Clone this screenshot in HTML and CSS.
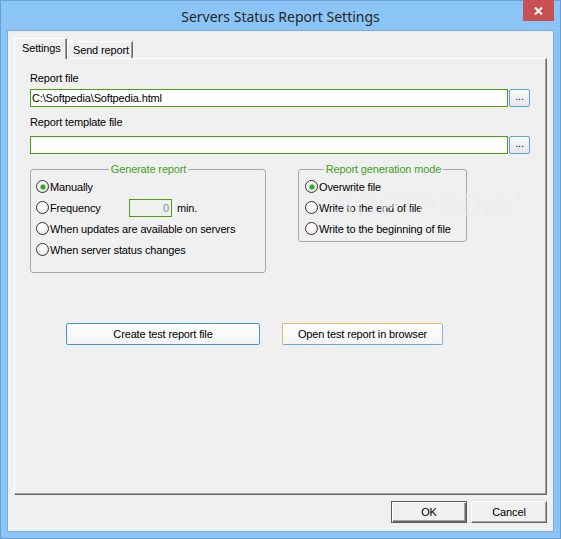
FILE: index.html
```html
<!DOCTYPE html>
<html>
<head>
<meta charset="utf-8">
<link rel="stylesheet" href="styles.css">
</head>
<body>
<div class="window">
  <div class="titlebar">
    <span class="title">Servers Status Report Settings</span>
    <div class="close">
      <svg width="9" height="8" viewBox="0 0 9 8"><path d="M1 0.5 L8 7.5 M8 0.5 L1 7.5" stroke="#fff" stroke-width="2" fill="none"/></svg>
    </div>
  </div>
  <div class="client">
    <div class="tabs">
      <div class="tab active">Settings</div>
      <div class="tab inactive">Send report</div>
    </div>
    <div class="panel">
      <div class="label">Report file</div>
      <div class="filerow first">
        <div class="textbox">C:\Softpedia\Softpedia.html</div>
        <div class="browse">...</div>
      </div>
      <div class="label second">Report template file</div>
      <div class="filerow second">
        <div class="textbox"></div>
        <div class="browse">...</div>
      </div>
      <div class="groups">
        <fieldset class="group g1">
          <legend>Generate report</legend>
          <div class="opt"><span class="radio on"></span>Manually</div>
          <div class="opt"><span class="radio"></span><span class="freq">Frequency</span><span class="num">0</span><span class="min">min.</span></div>
          <div class="opt"><span class="radio"></span>When updates are available on servers</div>
          <div class="opt"><span class="radio"></span>When server status changes</div>
        </fieldset>
        <fieldset class="group g2">
          <legend>Report generation mode</legend>
          <div class="opt"><span class="radio on"></span>Overwrite file</div>
          <div class="opt"><span class="radio"></span>Write to the end of file</div>
          <div class="opt"><span class="radio"></span>Write to the beginning of file</div>
        </fieldset>
      </div>
      <div class="actions">
        <div class="btn create">Create test report file</div>
        <div class="btn open">Open test report in browser</div>
      </div>
      <div class="watermark">SOFTPEDIA<span class="reg">®</span></div>
    </div>
    <div class="footer">
      <div class="dlg ok">OK</div>
      <div class="dlg cancel">Cancel</div>
    </div>
  </div>
</div>
</body>
</html>
```
FILE: styles.css
```css
* { box-sizing: border-box; }
body {
  margin: 0;
  width: 561px;
  height: 539px;
  overflow: hidden;
  font-family: "Liberation Sans", Arial, sans-serif;
  font-size: 11px;
  letter-spacing: -0.15px;
  color: #000;
}
.window {
  width: 561px;
  height: 539px;
  background: #8bc4f7;
  border: 1px solid #6b9fd2;
  display: flex;
  flex-direction: column;
}
.titlebar {
  height: 29px;
  position: relative;
  display: flex;
  align-items: center;
  justify-content: center;
  flex: none;
}
.title {
  font-family: "Noto Sans", sans-serif;
  font-size: 14px;
  letter-spacing: 0;
  color: #262626;
  margin-top: 1px;
}
.close {
  position: absolute;
  top: -1px;
  right: 6px;
  width: 31px;
  height: 21px;
  background: #c75050;
  display: flex;
  align-items: center;
  justify-content: center;
}
.close svg { display: block; }
.client {
  flex: 1;
  margin: 0 6px 6px 6px;
  border: 1px solid #79aee2;
  background: #f0f0f0;
  display: flex;
  flex-direction: column;
}
.tabs {
  display: flex;
  align-items: flex-end;
  height: 28px;
  padding: 7px 0 0 6px;
  margin-bottom: -1px;
  position: relative;
  z-index: 1;
  flex: none;
}
.tab {
  background: #f0f0f0;
  border-top: 1px solid #fff;
  border-left: 1px solid #fff;
  border-right: 1px solid #696969;
  box-shadow: inset -1px 0 0 #a0a0a0;
  line-height: 13px;
  white-space: nowrap;
}
.tab.active {
  width: 53px;
  height: 21px;
  padding: 3px 0 0 7px;
}
.tab.inactive {
  width: 66px;
  height: 17px;
  margin-bottom: 1px;
  padding: 2px 0 0 5px;
}
.panel {
  flex: 1;
  position: relative;
  margin: 0 6px;
  border-top: 1px solid #fff;
  border-left: 1px solid #fff;
  border-right: 1px solid #696969;
  border-bottom: 1px solid #696969;
  box-shadow: inset -1px -1px 0 #a0a0a0;
  padding: 13px 15px 0 15px;
}
.label {
  line-height: 13px;
  height: 13px;
}
.label.second { margin-top: 9px; }
.filerow {
  display: flex;
  height: 18px;
  margin-top: 4px;
}
.filerow.second { margin-top: 7px; }
.textbox {
  width: 478px;
  height: 18px;
  border: 1px solid #4ca00c;
  background: #fff;
  line-height: 16px;
  padding-left: 1px;
  white-space: nowrap;
}
.browse {
  width: 21px;
  height: 18px;
  margin-left: 1px;
  border: 1px solid #5aa2ee;
  border-radius: 2px;
  background: linear-gradient(#f8f8f8, #e6e6e6);
  font-size: 11px;
  line-height: 13px;
  text-align: center;
  color: #300060;
}
.groups {
  display: flex;
  align-items: flex-start;
  gap: 32px;
  margin-top: 9px;
}
.group {
  margin: 0;
  border: 1px solid #a8a8a8;
  border-radius: 3px;
  min-width: 0;
}
.group legend {
  margin: 0 auto;
  padding: 0 2px;
  color: #3fa11c;
  line-height: 13px;
}
.g1 {
  width: 236px;
  padding: 0 4px 12px 5px;
}
.g2 {
  width: 169px;
  padding: 0 4px 2px 6px;
}
.opt {
  display: flex;
  align-items: center;
  height: 21px;
  white-space: nowrap;
}
.radio {
  width: 13px;
  height: 13px;
  flex: none;
  border-radius: 50%;
  border: 1px solid #333;
  background: radial-gradient(circle at 40% 35%, #ffffff 30%, #d8d8d8 100%);
  margin-right: 1px;
  display: flex;
  align-items: center;
  justify-content: center;
}
.radio.on::after {
  content: "";
  width: 4px;
  height: 4px;
  border-radius: 50%;
  background: #1fa01f;
  box-shadow: 0 0 0 1px #7fd07f;
}
.freq { width: 79px; }
.num {
  width: 43px;
  height: 18px;
  border: 1px solid #4ca00c;
  background: #f0f0f0;
  color: #8c8c8c;
  text-align: right;
  line-height: 16px;
  padding-right: 2px;
}
.min { margin-left: 5px; }
.actions {
  display: flex;
  margin-top: 50px;
  margin-left: 36px;
  gap: 22px;
}
.btn {
  height: 22px;
  border: 1px solid #3c96e6;
  border-radius: 2px;
  background: linear-gradient(#fefefe, #f4f4f4);
  display: flex;
  align-items: center;
  justify-content: center;
  white-space: nowrap;
}
.btn.create { width: 194px; }
.btn.open {
  width: 161px;
  border-color: #e7bb66 #8ab6e2 #6aa6e0 #e7bb66;
}
.watermark {
  position: absolute;
  left: 318px;
  top: 129px;
  font-family: "Liberation Sans", Arial, sans-serif;
  font-weight: bold;
  font-size: 31px;
  letter-spacing: 0.5px;
  color: rgba(255, 255, 255, 0.5);
  text-shadow: 0 0 1px rgba(0, 0, 0, 0.08);
  pointer-events: none;
  white-space: nowrap;
}
.watermark .reg {
  font-size: 9px;
  vertical-align: top;
  position: relative;
  top: 3px;
}
.footer {
  height: 36px;
  flex: none;
  display: flex;
  justify-content: flex-end;
  gap: 4px;
  padding: 6px 6px 0 0;
}
.dlg {
  width: 76px;
  height: 22px;
  background: #f0f0f0;
  display: flex;
  align-items: center;
  justify-content: center;
}
.dlg.ok {
  border: 1px solid #5a5a5a;
  box-shadow: inset 1px 1px 0 #fff, inset -1px -1px 0 #696969, inset -2px -2px 0 #a0a0a0;
}
.dlg.cancel {
  border-top: 1px solid #fff;
  border-left: 1px solid #fff;
  border-right: 1px solid #696969;
  border-bottom: 1px solid #696969;
  box-shadow: inset -1px -1px 0 #a0a0a0, -1px -1px 0 #e3e3e3;
}
```
